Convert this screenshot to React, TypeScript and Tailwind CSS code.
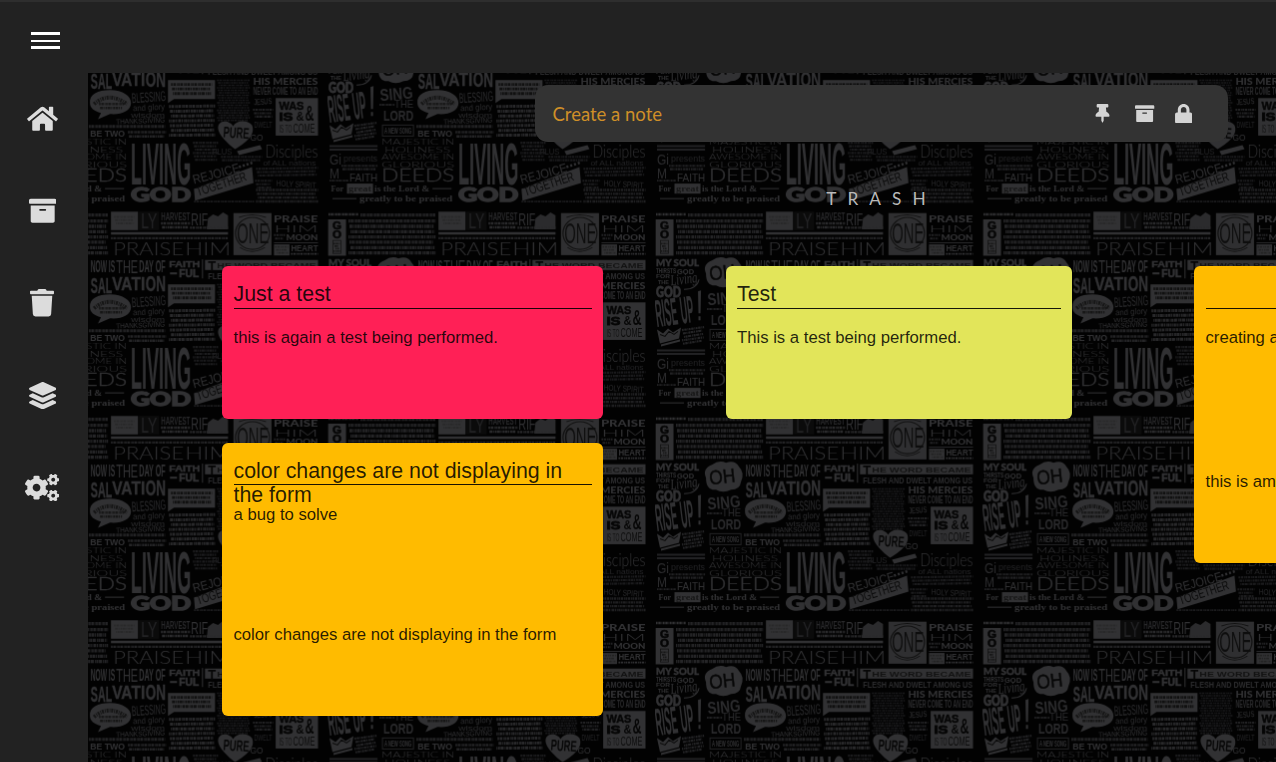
import React from "react";
import { FaHome, FaArchive, FaTrash, FaLayerGroup, FaCogs, FaThumbtack, FaLock } from "react-icons/fa";

const INK = "#313133";
const DIM = "#222224";

type WordProps = {
  x: number;
  r: number;
  t: number;
  b: number;
  s: string;
  weight?: number;
  fill?: string;
  family?: string;
  rotate?: number;
  heavy?: number;
};

// One lettering piece, fitted between x..r horizontally and t..b (cap height) vertically.
function Word({ x, r, t, b, s, weight = 700, fill = INK, family = "Liberation Sans, sans-serif", rotate = 0, heavy = 0 }: WordProps) {
  return (
    <text
      x={x}
      y={b}
      fontSize={(b - t) / 0.71}
      fontWeight={weight}
      fontFamily={family}
      fill={fill}
      stroke={heavy ? fill : "none"}
      strokeWidth={heavy}
      textLength={r - x}
      lengthAdjust="spacingAndGlyphs"
      transform={rotate ? `rotate(${rotate} ${x} ${b})` : undefined}
    >
      {s}
    </text>
  );
}

// Rows of fine broken strokes standing for lettering too small to read.
function Fine({ x, r, t, b, step = 3.4, fill = DIM, tilt = 0 }: { x: number; r: number; t: number; b: number; step?: number; fill?: string; tilt?: number }) {
  const dashes = ["1.6 .7 2.4 .8 .9 .6", "2.8 .6 1.1 .9 1.8 .5", ".9 .6 2 .6 3.1 1", "1.3 .8 .8 .5 2.2 .7"];
  const rows: React.ReactNode[] = [];
  let i = 0;
  for (let y = t + step / 2; y < b; y += step) {
    rows.push(
      <line key={i} x1={x + (i % 3)} x2={r - ((i * 2) % 3)} y1={y} y2={y - tilt} stroke={fill} strokeWidth={step * 0.62} strokeDasharray={dashes[i % 4]} />,
    );
    i++;
  }
  return <g>{rows}</g>;
}

const SERIF = "Liberation Serif, serif";
const WIDE = "Lato, sans-serif";

function Wallpaper() {
  return (
    <svg className="absolute inset-0 h-full w-full" aria-hidden="true">
      <defs>
        <pattern id="lettering" width="327.5" height="204.3" patternUnits="userSpaceOnUse" x="-88" y="138.4">
          <rect width="328" height="205" fill="#020202" />
          <Fine x={1} r={31} t={1} b={5} step={4} fill={INK} />
          <rect x="0.7" y="8" width="17.8" height="36.3" fill={INK} />
          <Word x={5} r={14} t={10} b={17.5} s="G" weight={900} fill="#050505" heavy={0.6} />
          <Word x={5} r={14} t={19} b={26.5} s="O" weight={900} fill="#050505" heavy={0.6} />
          <rect x="5.5" y="29" width="8" height="13" fill="none" stroke="#111" strokeWidth="0.8" />
          <Fine x={6} r={13} t={31} b={41} step={2.5} fill="#161616" />
          <Fine x={33} r={108} t={1} b={7} step={5.2} fill="#242426" />
          <Fine x={21} r={108} t={7} b={45} step={5.3} fill="#252527" />

          <rect x="111" y="0.3" width="27" height="18.4" fill={INK} />
          <Fine x={114} r={135} t={4} b={14} step={3.2} fill="#282829" />
          <rect x="139" y="0.3" width="20" height="18.4" fill="#0b0b0b" />
          <Word x={141} r={157} t={2} b={17} s="LY" weight={400} fill={DIM} />
          <Word x={161} r={190} t={1} b={9} s="HARVEST" fill="#272729" />
          <Fine x={161} r={190} t={10} b={18} step={4} fill="#2b2b2d" />
          <Word x={191} r={208} t={2} b={14} s="RIF" weight={400} />
          <path d="M207 16 L208 7 L213 3 L218 5 L223 1 L228 4 L228 18 L207 18Z" fill="#2b2b2d" />
          <Fine x={190} r={228} t={14.5} b={18.5} step={3.5} fill="#29292b" />
          <rect x="111" y="20.7" width="117" height="2.5" fill={INK} />
          <Fine x={111} r={228} t={25} b={28.5} step={3.5} fill="#252527" />
          <Word x={113} r={184} t={31.5} b={43.8} s="PRAISE" weight={300} family={WIDE} />
          <Word x={185} r={231} t={31.5} b={43.8} s="HIM" weight={300} family={WIDE} />
          <rect x="233.5" y="1.7" width="38" height="42" fill="#2f2f31" />
          <ellipse cx="252.5" cy="22" rx="17" ry="16" fill="none" stroke="#101010" strokeWidth="1.2" />
          <Word x={237} r={269} t={11} b={32} s="ONE" weight={400} fill="#0d0d0d" />
          <path d="M239 6 Q252 1 266 6 M240 36 Q252 44 265 36" stroke="#111" fill="none" />
          <Word x={273.5} r={318} t={4.2} b={11.3} s="PRAISE" weight={900} family={WIDE} />
          <Word x={274} r={318} t={13.5} b={20.7} s="HIM" weight={300} family={WIDE} />
          <Fine x={274} r={285} t={22} b={29} />
          <Word x={286} r={318} t={22.8} b={28.5} s="MOON" weight={900} family={WIDE} />
          <rect x="274" y="31" width="44" height="0.8" fill={INK} />
          <rect x="274" y="33" width="15.5" height="11" fill={INK} />
          <Fine x={275} r={289} t={34} b={43} step={3} fill="#222" />
          <Word x={291} r={318} t={33} b={40} s="HEART" />
          <Fine x={291} r={318} t={41} b={44} step={3} fill={INK} />

          <Word x={1} r={44} t={48} b={55} s="MY SOUL" weight={900} family={WIDE} heavy={0.4} />
          <Word x={1} r={21} t={57} b={61.5} s="THIRSTS" />
          <Word x={22} r={39} t={57.5} b={62.5} s="GOD" weight={900} />
          <Word x={1} r={15} t={63} b={67} s="FOR" weight={900} />
          <Word x={3} r={14} t={68.5} b={72.5} s="THE" weight={900} />
          <text x="16" y="74" fontSize="15" fontStyle="italic" fontFamily={SERIF} fill={INK} textLength="27" lengthAdjust="spacingAndGlyphs" transform="rotate(-7 16 74)">Living</text>
          <path d="M29 78 Q42 78 44 68" fill="none" stroke={INK} />
          <Word x={1} r={26} t={75} b={86} s="GOD" weight={900} family={WIDE} heavy={0.8} />
          <Word x={2} r={24} t={88} b={115.5} s="RISE" weight={700} rotate={-7} />
          <Word x={27} r={40} t={85} b={112.3} s="UP" weight={700} rotate={-7} />
          <path d="M43 80 L46 79 L45.5 102 L43.5 102Z M43.5 105 L45.5 105 V109 H43.5Z" fill={INK} />
          <path d="M2 118 L8 122 L13 117 L18 121 L26 116 L24 127 L5 132Z M6 133 L25 128 L25 130 L6 135Z" fill={INK} />
          <path d="M5 123 L10 125 L14 120 L19 123 L23 120" fill="none" stroke="#080808" />
          <Fine x={27} r={49} t={117} b={133} tilt={3} fill="#242426" />
          <path d="M2 139 H50 M2 142.5 H50" stroke={DIM} strokeWidth="1.8" />
          <Word x={2} r={14} t={147} b={157} s="Gi" weight={400} fill="#2a2a2c" />
          <Word x={16} r={50} t={148} b={154} s="presents" weight={400} fill={DIM} />
          <Word x={2} r={12} t={161} b={171} s="M" weight={400} fill="#2a2a2c" />
          <Fine x={14} r={50} t={157} b={165} fill={DIM} />
          <Word x={22} r={50} t={166} b={174} s="FAITH" weight={400} />
          <Fine x={2} r={21} t={172} b={175} step={3} />
          <Word x={3.5} r={16} t={178} b={184.5} s="For" family={SERIF} />
          <rect x="19.5" y="176.5" width="26" height="10" fill={INK} />
          <Word x={21} r={44} t={178.5} b={184.5} s="great" family={SERIF} fill="#151515" />
          <Word x={47} r={102} t={178} b={184.5} s="is the Lord &" family={SERIF} />
          <rect x="105" y="181" width="19" height="1" fill={INK} />
          <rect x="5" y="191" width="24" height="1" fill={INK} />
          <Word x={32} r={125} t={187.5} b={194} s="greatly to be praised" family={SERIF} />

          <path d="M51 62 Q47 53 57 49 Q64 44 71 47 Q80 44 84 51 Q90 57 86 66 Q85 74 76 74 Q68 78 61 74 Q51 75 51 62Z" fill={INK} />
          <Word x={55} r={81} t={55} b={69} s="OH" weight={400} fill="#060606" rotate={-6} heavy={0.5} />
          <Word x={53} r={86} t={82} b={94} s="SING" rotate={-5} fill="#2a2a2c" />
          <Fine x={52} r={67} t={96} b={101} />
          <Word x={67} r={86} t={93} b={101} s="THE" weight={400} fill="#2a2a2c" />
          <Word x={56} r={86} t={103} b={114} s="LORD" fill="#29292b" />
          <rect x="55" y="118" width="31" height="11" fill="none" stroke={DIM} />
          <Word x={57} r={84} t={120} b={127} s="A NEW SONG" />
          <Word x={54} r={127} t={133} b={138} s="MAJESTIC IN" weight={300} family={WIDE} />
          <Word x={57} r={123} t={140} b={145.5} s="HOLINESS" weight={300} family={WIDE} />
          <Word x={54} r={127} t={147} b={152.5} s="AWESOME IN" weight={300} family={WIDE} />
          <Word x={54} r={127} t={154} b={160} s="GLORIOUS" weight={300} family={WIDE} />
          <Word x={54} r={127} t={162} b={174} s="DEEDS" weight={300} family={WIDE} heavy={0.3} />

          <Word x={90.5} r={115} t={49} b={61} s="NOW IS" />
          <Word x={116} r={138} t={49} b={62} s="THE" weight={400} />
          <Word x={139} r={165.5} t={49} b={61} s="DAY OF" />
          <Word x={90.7} r={112} t={66} b={82} s="SAL" heavy={0.3} />
          <Word x={112} r={145} t={65.5} b={79} s="VATI" heavy={0.3} />
          <Word x={145.5} r={165.7} t={64.5} b={79.5} s="ON" heavy={0.3} />
          <path d="M90 96 C89 87 98 83 110 83 C123 83 131 89 131 96 C131 104 121 108 110 107 L98 112 L101 106 C94 104 90 101 90 96Z" fill={INK} />
          <path d="M94 97 Q109 84 127 97" fill="none" stroke="#151515" strokeWidth="4" strokeDasharray="2 .9 1 .8" />
          <Fine x={99} r={124} t={95} b={105} step={4} fill="#161616" />
          <Word x={132} r={166} t={86} b={96} s="BLESSING" weight={400} rotate={-4} fill="#2a2a2c" />
          <Word x={133} r={165} t={98} b={104} s="and glory" weight={400} rotate={-3} fill="#2a2a2c" />
          <Word x={131} r={165} t={106} b={111} s="wisdom" weight={400} fill="#29292b" />
          <Word x={116} r={165} t={112} b={117} s="THANKSGIVING" weight={400} rotate={-2} />
          <Fine x={89} r={165} t={117} b={122} step={4.6} fill="#252527" />
          <Word x={90} r={125} t={123} b={129.5} s="BE TWO" weight={900} />
          <Fine x={128} r={166} t={123} b={133} step={4.2} fill="#252527" />
          <Word x={130.7} r={191} t={135.5} b={177} s="LIVING" />
          <Word x={130.7} r={191} t={180} b={194} s="GOD" weight={900} family={WIDE} heavy={1.4} />

          <Word x={169} r={200} t={49} b={56} s="FAITH" weight={900} heavy={0.4} />
          <rect x="170" y="61" width="7" height="2" fill={INK} />
          <Word x={179} r={199} t={58} b={66} s="FUL" weight={900} heavy={0.5} />
          <rect x="202" y="48" width="1" height="19" fill={INK} />
          <rect x="205" y="48.6" width="113" height="10" fill={INK} />
          <Word x={208} r={216} t={50} b={60} s="T" weight={900} fill="#050505" />
          <Word x={217} r={316} t={51} b={56.5} s="HE WORD BECAME" fill="#111" />
          <Word x={208} r={317.6} t={61.6} b={67.4} s="FLESH AND DWELT AMONG US" fill="#2b2b2d" />
          <path d="M168 73 H215 V92 H174 L168 96Z" fill={INK} />
          <Fine x={171} r={212} t={75} b={90} step={4.6} fill="#101010" />
          <Fine x={169} r={215} t={97} b={132} step={4.8} fill="#29292b" tilt={0.5} />
          <Fine x={217} r={250} t={72} b={115} step={2.5} fill="#19191b" />
          <Word x={253} r={318} t={71.5} b={77.5} s="HIS MERCIES" weight={900} family={WIDE} />
          <Word x={253} r={318} t={80} b={88} s="NEVER COME TO AN END" fill="#2a2a2c" />
          <Word x={254} r={272} t={92} b={98} s="JESUS" weight={400} rotate={-4} />
          <Fine x={253} r={273} t={101} b={112} fill={DIM} />
          <Word x={254} r={272} t={115} b={121} s="DWELT" weight={400} fill={DIM} />
          <rect x="275.7" y="91" width="42.3" height="37.5" fill={INK} />
          <Word x={279} r={304} t={95} b={103} s="WAS" weight={900} fill="#050505" heavy={0.5} />
          <Word x={279} r={293} t={106} b={114} s="IS" weight={900} fill="#050505" heavy={0.8} />
          <Word x={296} r={304} t={105} b={114} s="&" weight={700} fill="#050505" />
          <Word x={305} r={314} t={98} b={114} s="&" weight={700} fill="#050505" />
          <Word x={279} r={292} t={118} b={126} s="IS TO" weight={400} fill="#101010" />
          <Word x={293} r={315} t={117.5} b={126} s="COME" weight={400} fill="#0b0b0b" />
          <path d="M235 142 C225 134 215 124 219 117 C223 112 231 115 233 119 C237 112 248 113 252 118 C256 128 245 136 235 142Z" fill={INK} />
          <Word x={223} r={249} t={119} b={130} s="PURE" weight={700} fill="#060606" rotate={4} />
          <path d="M237 144 L260 138 L262 142 L239 148Z" fill={INK} />
          <Word x={250} r={263} t={128} b={134} s="GO" weight={400} />
          <Word x={212} r={232} t={140} b={147} s="PLUS" weight={400} fill={DIM} />
          <Fine x={193} r={218} t={134} b={154} fill="#1c1c1e" />
          <Word x={265} r={318} t={138} b={150} s="Disciples" weight={300} family={WIDE} />
          <Word x={263} r={316} t={153} b={158} s="of ALL nations" weight={400} fill={DIM} />
          <Word x={194} r={242} t={168} b={177} s="REJOICE" weight={400} rotate={-15} />
          <path d="M239 160 L254 155" stroke={INK} strokeWidth="2.5" strokeDasharray="2 2" />
          <path d="M194 182 L252 160 L253.5 176 L195 193.5Z" fill={INK} />
          <Word x={198} r={250} t={180} b={189} s="TOGETHER" weight={400} fill="#080808" rotate={-18} />
          <Fine x={221} r={262} t={148} b={155} fill="#1a1a1c" />
          <Fine x={256} r={318} t={160} b={171} fill="#1b1b1d" tilt={1} />
          <Word x={276} r={316} t={173} b={179} s="HOLY SPIRIT" weight={400} fill="#272729" rotate={3} />
          <Fine x={256} r={318} t={181} b={196} step={3.8} fill="#202022" />
          <Fine x={194} r={254} t={193} b={196} step={3} fill="#1c1c1e" />
          <Fine x={255} r={272} t={172} b={181} fill="#1c1c1e" />
        </pattern>
      </defs>
      <rect width="100%" height="100%" fill="url(#lettering)" />
    </svg>
  );
}

function Note({ title, lines, className }: { title: string; lines: string[]; className: string }) {
  return (
    <article className={`rounded-[6px] px-[11.5px] pt-4 text-black/85 ${className}`}>
      <h2 className="h-[26.5px] border-b border-black/90 text-[21.35px] leading-6">{title}</h2>
      <div className="flex flex-col pt-[17.8px] text-[16.7px] leading-6">
        {lines.map((line, i) => (
          <p key={i} className="h-6 whitespace-nowrap">{line}</p>
        ))}
      </div>
    </article>
  );
}

export default function App() {
  return (
    <div className="flex h-[762px] w-full flex-col overflow-hidden bg-[#222222] font-['Liberation_Sans',sans-serif]">
      <header className="h-[73px] shrink-0 border-t-2 border-[#2e2e2e] pt-[30px] pl-[31px]">
        <button aria-label="Menu" className="flex w-[29px] flex-col">
          <span className="h-[3px] w-full bg-white" />
          <span className="mt-[5px] h-[2px] w-full bg-white" />
          <span className="mt-1 h-[3px] w-full bg-white" />
        </button>
      </header>
      <div className="flex min-h-0 flex-1">
        <nav className="flex w-[88px] shrink-0 flex-col items-center gap-[64.9px] pt-[31.7px] pr-[3.4px] text-[#dcdcdc]">
          <FaHome className="h-[27.4px] w-[31px] shrink-0" />
          <FaArchive className="h-[27.4px] w-[27.4px] shrink-0" />
          <FaTrash className="h-[27.4px] w-[24px] shrink-0" />
          <FaLayerGroup className="h-[27.4px] w-[27.4px] shrink-0" />
          <FaCogs className="h-[27.4px] w-[34.2px] shrink-0" />
        </nav>
        <main className="relative min-w-0 flex-1 overflow-hidden bg-black">
          <Wallpaper />
          <div className="relative flex flex-col">
            <div className="mt-3 ml-[447px] flex h-[57px] w-[693px] items-center rounded-[13px] bg-[#333333] pr-[35.7px] pl-[17.5px] text-[#d4d4d4]">
              <span className="flex-1 pt-[2px] font-['Lato',sans-serif] text-[18.5px] text-[#cf8f28]">Create a note</span>
              <FaThumbtack className="mr-[25.6px] h-[18.7px] w-[15px]" />
              <FaArchive className="mr-[20.3px] h-[19.3px] w-[19.3px]" />
              <FaLock className="h-[19.7px] w-[17.3px]" />
            </div>
            <h1 className="mt-[45px] ml-[447px] h-6 w-[693px] text-center font-['Lato',sans-serif] text-[17.3px] leading-6 tracking-[11px] text-[#b9b9b9]">TRASH</h1>
            <div className="mt-[55px] flex w-[1500px] items-start pl-[134px]">
              <div className="flex w-[381px] flex-col gap-[23.7px]">
                <Note title="Just a test" lines={["this is again a test being performed."]} className="h-[153px] bg-[#ff2056]" />
                <Note
                  title="color changes are not displaying in the form"
                  lines={["a bug to solve", "", "", "", "", "color changes are not displaying in the form"]}
                  className="h-[273px] bg-[#ffbb00]"
                />
              </div>
              <Note title="Test" lines={["This is a test being performed."]} className="ml-[122.5px] h-[153px] w-[346.5px] bg-[#e2e55a]" />
              <Note title="" lines={["creating a", "", "", "", "", "", "this is am"]} className="ml-[122px] h-[297px] w-[381px] bg-[#ffbb00]" />
            </div>
          </div>
        </main>
      </div>
    </div>
  );
}
